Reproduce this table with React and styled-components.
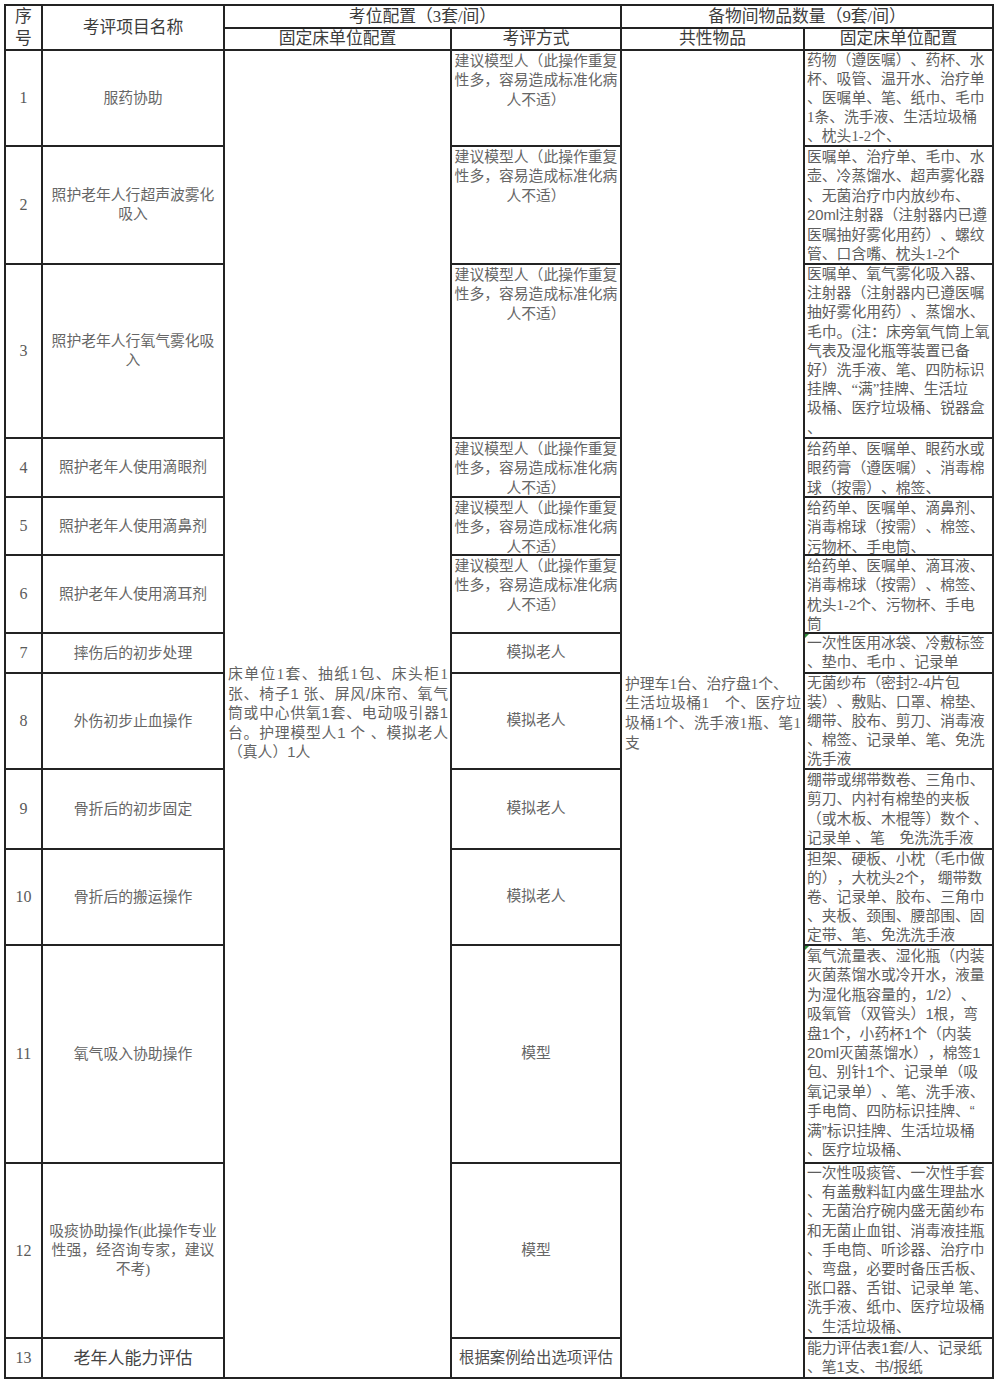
import React from "react";
import styled, { createGlobalStyle } from "styled-components";

const GlobalStyle = createGlobalStyle`
  html, body {
    margin: 0;
    padding: 0;
    background: #fff;
  }
  body {
    font-family: "Liberation Serif", "Noto Sans CJK SC", serif;
    color: #5e5e5e;
    text-spacing-trim: space-all;
  }
`;

const Page = styled.div`
  padding: 4px 0 0 4px;
`;

const Sheet = styled.div`
  display: grid;
  width: max-content;
  grid-template-columns: 35px 180px 225px 168px 181px 187px;
  grid-template-rows:
    21px 20px 94px 116px 172px 57px 56px 76px 38px 94px 78px 94px
    216px 173px 38px;
  gap: 2px;
  padding: 2px;
  background: #232323;
`;

const Cell = styled.div`
  position: relative;
  background: #fff;
  grid-row: span ${(p) => p.$rows || 1};
  grid-column: span ${(p) => p.$cols || 1};
  display: flex;
  flex-direction: column;
  justify-content: ${(p) => (p.$top ? "flex-start" : "center")};
  overflow: hidden;
`;

const HeadCell = styled(Cell)`
  align-items: center;
  text-align: center;
  font-size: 16.8px;
  line-height: ${(p) => (p.$tall ? "22px" : "20px")};
  color: #3c3c3c;
`;

const SeqCell = styled(Cell)`
  align-items: center;
  font-size: 16px;
  color: #5a5a5a;
`;

const NameCell = styled(Cell)`
  align-items: center;
  text-align: center;
  font-size: ${(p) => (p.$big ? "17px" : "14.8px")};
  line-height: 19px;
  color: ${(p) => (p.$big ? "#444" : "#666")};
`;

const MethodCell = styled(Cell)`
  align-items: center;
  text-align: center;
  padding-top: ${(p) => (p.$top ? "1px" : "0")};
  font-size: ${(p) => (p.$big ? "15.4px" : "14.8px")};
  line-height: 19.4px;
  color: ${(p) => (p.$big ? "#505050" : "#666")};
`;

const SharedCell = styled(Cell)`
  padding: 0 2px 0 3px;
  font-size: 14.8px;
  line-height: 19.6px;
  color: #636363;
`;

const ItemsCell = styled(Cell)`
  padding: ${(p) => (p.$lh ? "0" : "1px")} 0 0 2px;
  font-size: 14.8px;
  line-height: ${(p) => p.$lh || 19.4}px;
  color: #5e5e5e;
  font-family: ${(p) =>
    p.$sans
      ? '"Liberation Sans", "Noto Sans CJK SC", sans-serif'
      : '"Liberation Serif", "Noto Sans CJK SC", serif'};

  &::before {
    content: "";
    display: ${(p) => (p.$mark ? "block" : "none")};
    position: absolute;
    top: 0;
    left: 0;
    border-top: 4px solid #2e8b3a;
    border-right: 4px solid transparent;
  }
`;

const Line = styled.span`
  display: block;
  white-space: nowrap;
`;

const JustLine = styled.span`
  display: block;
  white-space: nowrap;
  text-align: ${(p) => (p.$last ? "left" : "justify")};
  text-align-last: ${(p) => (p.$last ? "left" : "justify")};
`;

const Sans = styled.span`
  font-family: "Liberation Sans", "Noto Sans CJK SC", sans-serif;
`;

const SUGGEST = ["建议模型人（此操作重复", "性多，容易造成标准化病", "人不适）"];

const rows = [
  {
    no: "1",
    name: ["服药协助"],
    method: SUGGEST,
    lh: 18.9,
    items: [
      "药物（遵医嘱）、药杯、水",
      "杯、吸管、温开水、治疗单",
      "、医嘱单、笔、纸巾、毛巾",
      "1条、洗手液、生活垃圾桶",
      "、枕头1-2个、",
    ],
  },
  {
    no: "2",
    name: ["照护老年人行超声波雾化", "吸入"],
    method: SUGGEST,
    items: [
      "医嘱单、治疗单、毛巾、水",
      "壶、冷蒸馏水、超声雾化器",
      "、无菌治疗巾内放纱布、",
      { sans: "20ml", rest: "注射器（注射器内已遵" },
      "医嘱抽好雾化用药）、螺纹",
      "管、口含嘴、枕头1-2个",
    ],
  },
  {
    no: "3",
    name: ["照护老年人行氧气雾化吸", "入"],
    method: SUGGEST,
    lh: 19.2,
    items: [
      "医嘱单、氧气雾化吸入器、",
      "注射器（注射器内已遵医嘱",
      "抽好雾化用药）、蒸馏水、",
      "毛巾。(注：床旁氧气筒上氧",
      "气表及湿化瓶等装置已备",
      "好）洗手液、笔、四防标识",
      "挂牌、“满”挂牌、生活垃",
      "圾桶、医疗垃圾桶、锐器盒",
      "、",
    ],
  },
  {
    no: "4",
    name: ["照护老年人使用滴眼剂"],
    method: SUGGEST,
    items: ["给药单、医嘱单、眼药水或", "眼药膏（遵医嘱）、消毒棉", "球（按需）、棉签、"],
  },
  {
    no: "5",
    name: ["照护老年人使用滴鼻剂"],
    method: SUGGEST,
    items: ["给药单、医嘱单、滴鼻剂、", "消毒棉球（按需）、棉签、", "污物杯、手电筒、"],
  },
  {
    no: "6",
    name: ["照护老年人使用滴耳剂"],
    method: SUGGEST,
    items: [
      "给药单、医嘱单、滴耳液、",
      "消毒棉球（按需）、棉签、",
      "枕头1-2个、污物杯、手电",
      "筒",
    ],
  },
  {
    no: "7",
    name: ["摔伤后的初步处理"],
    method: ["模拟老人"],
    mark: true,
    lh: 18.8,
    items: ["一次性医用冰袋、冷敷标签", "、垫巾、毛巾 、记录单"],
  },
  {
    no: "8",
    name: ["外伤初步止血操作"],
    method: ["模拟老人"],
    lh: 18.9,
    items: [
      "无菌纱布（密封2-4片包",
      "装）、敷贴、口罩、棉垫、",
      "绷带、胶布、剪刀、消毒液",
      "、棉签、记录单、笔、免洗",
      "洗手液",
    ],
  },
  {
    no: "9",
    name: ["骨折后的初步固定"],
    method: ["模拟老人"],
    items: [
      "绷带或绑带数卷、三角巾、",
      "剪刀、内衬有棉垫的夹板",
      "（或木板、木棍等）数个 、",
      "记录单 、笔　免洗洗手液",
    ],
  },
  {
    no: "10",
    name: ["骨折后的搬运操作"],
    method: ["模拟老人"],
    sans: true,
    lh: 18.9,
    items: [
      "担架、硬板、小枕（毛巾做",
      "的），大枕头2个， 绷带数",
      "卷、记录单、胶布、三角巾",
      "、夹板、颈围、腰部围、固",
      "定带、笔、免洗洗手液",
    ],
  },
  {
    no: "11",
    name: ["氧气吸入协助操作"],
    method: ["模型"],
    mark: true,
    sans: true,
    items: [
      "氧气流量表、湿化瓶（内装",
      "灭菌蒸馏水或冷开水，液量",
      "为湿化瓶容量的，1/2）、",
      "吸氧管（双管头）1根，弯",
      "盘1个，小药杯1个（内装",
      "20ml灭菌蒸馏水），棉签1",
      "包、别针1个、记录单（吸",
      "氧记录单）、笔、洗手液、",
      "手电筒、四防标识挂牌、“",
      "满”标识挂牌、生活垃圾桶",
      "、医疗垃圾桶、",
    ],
  },
  {
    no: "12",
    name: ["吸痰协助操作(此操作专业", "性强，经咨询专家，建议", "不考)"],
    method: ["模型"],
    lh: 19.2,
    items: [
      "一次性吸痰管、一次性手套",
      "、有盖敷料缸内盛生理盐水",
      "、无菌治疗碗内盛无菌纱布",
      "和无菌止血钳、消毒液挂瓶",
      "、手电筒、听诊器、治疗巾",
      "、弯盘，必要时备压舌板、",
      "张口器、舌钳、记录单 笔、",
      "洗手液、纸巾、医疗垃圾桶",
      "、生活垃圾桶、",
    ],
  },
  {
    no: "13",
    name: ["老年人能力评估"],
    big: true,
    method: ["根据案例给出选项评估"],
    sans: true,
    lh: 18.8,
    items: ["能力评估表1套/人、记录纸", "、笔1支、书/报纸"],
  },
];

const bedLines = [
  "床单位1套、抽纸1包、床头柜1",
  "张、椅子1 张、屏风/床帘、氧气",
  "筒或中心供氧1套、电动吸引器1",
  "台。护理模型人1 个 、模拟老人",
  "（真人）1人",
];

const commonLines = [
  "护理车1台、治疗盘1个、",
  "生活垃圾桶1　个、医疗垃",
  "圾桶1个、洗手液1瓶、笔1",
  "支",
];

const renderItem = (line, i) =>
  typeof line === "string" ? (
    <Line key={i}>{line}</Line>
  ) : (
    <Line key={i}>
      <Sans>{line.sans}</Sans>
      {line.rest}
    </Line>
  );

const SharedText = ({ lines, sansFrom, plainFirst }) =>
  lines.map((l, i) => {
    const last = i === lines.length - 1 || (plainFirst && i === 0);
    return (
      <JustLine key={i} $last={last}>
        {i >= sansFrom ? <Sans>{l}</Sans> : l}
      </JustLine>
    );
  });

const App = () => {
  return (
    <Page>
      <GlobalStyle />
      <Sheet>
        <HeadCell $rows={2} $tall>
          <Line>序</Line>
          <Line>号</Line>
        </HeadCell>
        <HeadCell $rows={2}>考评项目名称</HeadCell>
        <HeadCell $cols={2}>考位配置（3套/间）</HeadCell>
        <HeadCell $cols={2}>备物间物品数量（9套/间）</HeadCell>
        <HeadCell>固定床单位配置</HeadCell>
        <HeadCell>考评方式</HeadCell>
        <HeadCell>共性物品</HeadCell>
        <HeadCell>固定床单位配置</HeadCell>

        {rows.map((r, idx) => (
          <React.Fragment key={r.no}>
            <SeqCell>{r.no}</SeqCell>
            <NameCell $big={r.big}>
              {r.name.map((n, i) => (
                <Line key={i}>{n}</Line>
              ))}
            </NameCell>
            {idx === 0 && (
              <SharedCell $rows={13}>
                <SharedText lines={bedLines} sansFrom={1} />
              </SharedCell>
            )}
            <MethodCell $top={r.method.length > 1} $big={r.big}>
              {r.method.map((m, i) => (
                <Line key={i}>{m}</Line>
              ))}
            </MethodCell>
            {idx === 0 && (
              <SharedCell $rows={13}>
                <SharedText lines={commonLines} sansFrom={99} plainFirst />
              </SharedCell>
            )}
            <ItemsCell $top $mark={r.mark} $sans={r.sans} $lh={r.lh}>
              {r.items.map(renderItem)}
            </ItemsCell>
          </React.Fragment>
        ))}
      </Sheet>
    </Page>
  );
};

export default App;
